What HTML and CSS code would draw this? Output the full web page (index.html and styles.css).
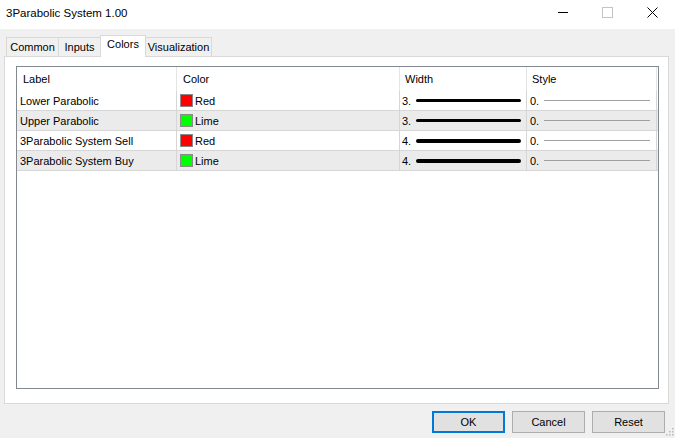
FILE: index.html
```html
<!DOCTYPE html>
<html>
<head>
<meta charset="utf-8">
<title>3Parabolic System 1.00</title>
<link rel="stylesheet" href="styles.css">
</head>
<body>
<div class="window">
  <div class="titlebar">
    <div class="title">3Parabolic System 1.00</div>
    <div class="caption-buttons">
      <div class="cap-btn"><svg width="10" height="10" viewBox="0 0 10 10"><line x1="0" y1="5.5" x2="10" y2="5.5" stroke="#000" stroke-width="1"/></svg></div>
      <div class="cap-btn"><svg width="11" height="11" viewBox="0 0 11 11"><rect x="0.5" y="0.5" width="10" height="10" fill="none" stroke="#c4c4c4" stroke-width="1"/></svg></div>
      <div class="cap-btn"><svg width="11" height="11" viewBox="0 0 11 11"><path d="M0.5 0.5 L10.5 10.5 M10.5 0.5 L0.5 10.5" stroke="#000" stroke-width="1" fill="none"/></svg></div>
    </div>
  </div>
  <div class="content">
    <div class="tabs">
      <div class="tab tab-common">Common</div>
      <div class="tab tab-inputs">Inputs</div>
      <div class="tab tab-colors active">Colors</div>
      <div class="tab tab-vis">Visualization</div>
    </div>
    <div class="panel">
      <div class="list">
        <div class="row header">
          <div class="cell c-label">Label</div>
          <div class="cell c-color">Color</div>
          <div class="cell c-width">Width</div>
          <div class="cell c-style">Style</div>
        </div>
        <div class="row">
          <div class="cell c-label">Lower Parabolic</div>
          <div class="cell c-color"><span class="swatch red"></span>Red</div>
          <div class="cell c-width"><span>3.</span><span class="wline w3"></span></div>
          <div class="cell c-style"><span>0.</span><span class="sline"></span></div>
        </div>
        <div class="row alt">
          <div class="cell c-label">Upper Parabolic</div>
          <div class="cell c-color"><span class="swatch lime"></span>Lime</div>
          <div class="cell c-width"><span>3.</span><span class="wline w3"></span></div>
          <div class="cell c-style"><span>0.</span><span class="sline"></span></div>
        </div>
        <div class="row">
          <div class="cell c-label">3Parabolic System Sell</div>
          <div class="cell c-color"><span class="swatch red"></span>Red</div>
          <div class="cell c-width"><span>4.</span><span class="wline w4"></span></div>
          <div class="cell c-style"><span>0.</span><span class="sline"></span></div>
        </div>
        <div class="row alt">
          <div class="cell c-label">3Parabolic System Buy</div>
          <div class="cell c-color"><span class="swatch lime"></span>Lime</div>
          <div class="cell c-width"><span>4.</span><span class="wline w4"></span></div>
          <div class="cell c-style"><span>0.</span><span class="sline"></span></div>
        </div>
      </div>
    </div>
    <div class="buttons">
      <div class="btn default">OK</div>
      <div class="btn">Cancel</div>
      <div class="btn">Reset</div>
    </div>
  </div>
  <svg class="grip" width="8" height="8" viewBox="0 0 8 8">
    <rect x="6" y="0" width="1.5" height="1.5" fill="#b8b8b8"/>
    <rect x="3" y="3" width="1.5" height="1.5" fill="#b8b8b8"/>
    <rect x="6" y="3" width="1.5" height="1.5" fill="#b8b8b8"/>
    <rect x="0" y="6" width="1.5" height="1.5" fill="#b8b8b8"/>
    <rect x="3" y="6" width="1.5" height="1.5" fill="#b8b8b8"/>
    <rect x="6" y="6" width="1.5" height="1.5" fill="#b8b8b8"/>
  </svg>
</div>
</body>
</html>
```
FILE: styles.css
```css
* { box-sizing: border-box; }
html, body { margin: 0; padding: 0; }
body {
  font-family: "Liberation Sans", Arial, sans-serif;
  font-size: 11px;
  color: #000;
  background: #f0f0f0;
}
.window {
  position: relative;
  width: 675px;
  height: 438px;
  background: #f0f0f0;
  overflow: hidden;
}
.titlebar {
  display: flex;
  height: 29px;
  background: #fff;
}
.title {
  padding: 5px 0 0 6px;
  line-height: 16px;
  font-size: 11.5px;
}
.caption-buttons {
  display: flex;
  margin-left: auto;
}
.cap-btn {
  width: 45px;
  height: 29px;
  display: flex;
  justify-content: center;
  padding-top: 7px;
}
.cap-btn svg { display: block; }
.content { padding-top: 6px; }
.tabs {
  display: flex;
  align-items: flex-end;
  height: 21px;
  padding-left: 6px;
}
.tab {
  height: 19px;
  border: 1px solid #d9d9d9;
  border-bottom: none;
  background: #f0f0f0;
  margin-left: -1px;
  text-align: center;
  line-height: 18px;
}
.tab-common { margin-left: 0; width: 53px; }
.tab-inputs { width: 43px; }
.tab-colors { width: 46px; }
.tab-vis { width: 67px; }
.tab.active {
  height: 22px;
  margin-bottom: -1px;
  background: #fff;
  position: relative;
  z-index: 1;
  line-height: 16px;
}
.panel {
  margin-left: 4px;
  width: 665px;
  height: 348px;
  border: 1px solid #d9d9d9;
  background: #fff;
  padding: 9px 9px 14px 11px;
}
.list {
  height: 100%;
  border: 1px solid #828790;
  background: #fff;
}
.row {
  display: flex;
  height: 20px;
  border-bottom: 1px solid #d6d6d6;
}
.row.alt { background: #ebebeb; }
.row.header {
  height: 24px;
  border-bottom: none;
  background: #fff;
}
.cell {
  display: flex;
  align-items: center;
  border-right: 1px solid #d6d6d6;
  white-space: nowrap;
}
.header .cell { border-right-color: #e5e5e5; padding-left: 6px; }
.c-label { width: 160px; padding-left: 3px; }
.c-color { width: 223px; padding-left: 3px; }
.c-width { width: 127px; padding-left: 2px; }
.c-style { width: 130px; padding-left: 3px; }
.header .c-width, .header .c-style { padding-left: 5px; }
.swatch {
  width: 13px;
  height: 13px;
  border: 1px solid #8a8a8a;
  margin-right: 2px;
}
.swatch.red { background: #ff0000; }
.swatch.lime { background: #00ff00; }
.wline {
  margin-left: auto;
  margin-right: 5px;
  width: 105px;
  background: #000;
  border-radius: 2px;
}
.wline.w3 { height: 3px; }
.wline.w4 { height: 4px; }
.sline {
  margin-left: auto;
  margin-right: 6px;
  width: 106px;
  height: 1px;
  background: #a0a0a0;
}
.buttons {
  display: flex;
  justify-content: flex-end;
  gap: 7px;
  margin-top: 7px;
  padding-right: 10px;
}
.btn {
  width: 73px;
  height: 22px;
  border: 1px solid #adadad;
  background: #e1e1e1;
  text-align: center;
  line-height: 20px;
}
.btn.default {
  border: 2px solid #0078d7;
  line-height: 18px;
}
.grip {
  position: absolute;
  right: 1px;
  bottom: 2px;
}
```
